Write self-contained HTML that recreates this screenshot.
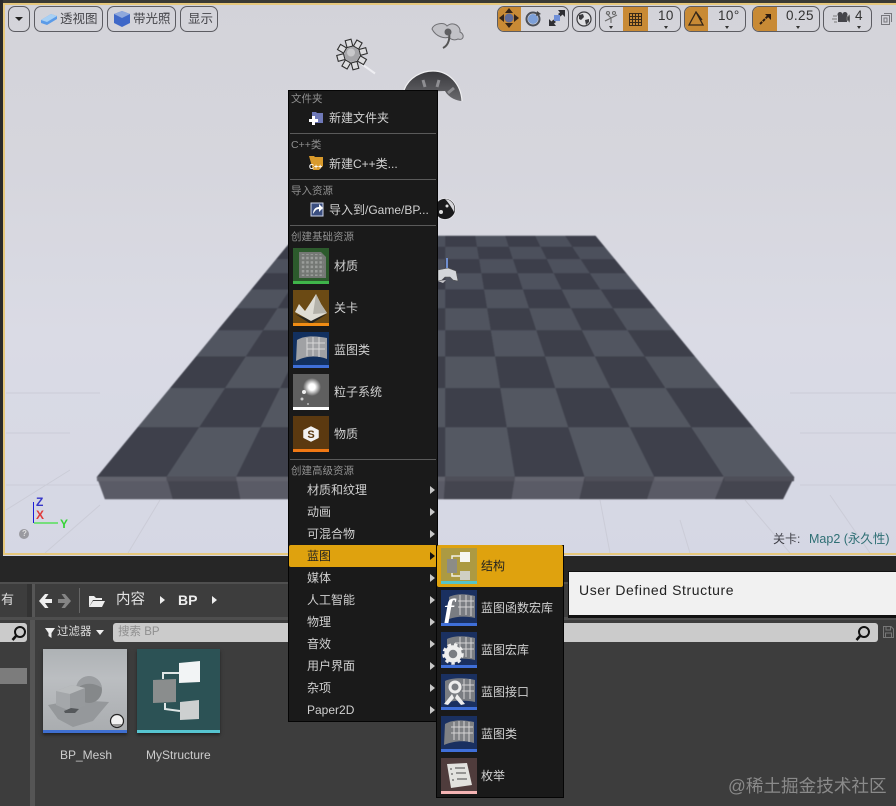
<!DOCTYPE html>
<html><head><meta charset="utf-8">
<style>
*{box-sizing:border-box}
html,body{margin:0;padding:0;background:#3d3d3d}
body{width:896px;height:806px;position:relative;overflow:hidden;font-family:"Liberation Sans","Noto Sans CJK SC",sans-serif}
.a{position:absolute}
.t{position:absolute;white-space:nowrap;line-height:16px}
.btn{position:absolute;top:6px;height:26px;border:1px solid #5c5c62;border-radius:7px;color:#45454a;font-size:12.5px;line-height:24px;white-space:nowrap}
.or{position:absolute;top:7px;height:24px;background:#c88a35}
.h{font-size:10.5px;color:#8f8f8f;left:291px}
.i{font-size:12px;color:#d0d0d0}
.m{left:307px}
.arr{position:absolute;width:0;height:0;border-left:5px solid #c8c8c8;border-top:4.5px solid transparent;border-bottom:4.5px solid transparent}
.sep{position:absolute;left:290px;width:146px;height:1px;background:#5a5a5a}
.tile{position:absolute;width:36px;height:36px}
.bar{position:absolute;left:0;right:0;bottom:0;height:3px}
.num{font-size:13.5px;color:#333;letter-spacing:.4px}
.car{position:absolute;top:26px;border-left:2.5px solid transparent;border-right:2.5px solid transparent;border-top:3px solid #333}
</style></head><body>

<!-- viewport -->
<div class="a" style="left:0;top:0;width:896px;height:556px;background:linear-gradient(180deg,#d3d3d9 0,#d6d6dd 30%,#dadbe5 60%,#d5d7e4 100%)"></div>
<svg class="a" style="left:0;top:0" width="896" height="556" viewBox="0 0 896 556">
 <defs>
  <radialGradient id="gl"><stop offset="0" stop-color="#fff"/><stop offset=".35" stop-color="#fff"/><stop offset="1" stop-color="#fff" stop-opacity="0"/></radialGradient>
  <linearGradient id="dm" x1="0" y1="0" x2="0" y2="1"><stop offset="0" stop-color="#38383c"/><stop offset="1" stop-color="#6a6a6e"/></linearGradient>
 </defs>
 <g stroke="#cbccd7" stroke-width="1" fill="none">
  <path d="M6 393H100M6 433H70M6 485H100M790 393H896M800 433H896M800 485H896"/>
  <path d="M70 470L6 510M100 505L45 553M160 500L128 553M300 500L290 553M600 500L610 553M680 520L690 553M745 500L790 553M830 495L870 553"/>
 </g>
 <g id="floor" style="filter:blur(.5px)"></g>
 <!-- sun -->
 <g transform="translate(352,54.500)">
  <path d="M9 9L23 19" stroke="#eeeef2" stroke-width="2"/>
  <g fill="#dedee0" stroke="#2f2f2f" stroke-width="1.100">
   <rect x="-3" y="-15" width="6" height="7" transform="rotate(-15)"/><rect x="-3" y="-15" width="6" height="7" transform="rotate(30)"/><rect x="-3" y="-15" width="6" height="7" transform="rotate(75)"/><rect x="-3" y="-15" width="6" height="7" transform="rotate(120)"/><rect x="-3" y="-15" width="6" height="7" transform="rotate(165)"/><rect x="-3" y="-15" width="6" height="7" transform="rotate(210)"/><rect x="-3" y="-15" width="6" height="7" transform="rotate(255)"/><rect x="-3" y="-15" width="6" height="7" transform="rotate(300)"/>
  </g>
  <circle r="7.500" fill="#a5a5a8"/><circle cx="-1" cy="-2" r="4" fill="#c8c8ca"/>
 </g>
 <!-- cloud -->
 <g transform="translate(447,36)">
  <path d="M-15 -7C-13 -13 -3 -14 0 -10C6 -15 14 -10 13 -4C18 -2 17 5 11 3C7 5 3 3 2 1C-2 3 -11 1 -15 -7Z" fill="#c2c2c7" stroke="#707074" stroke-width="1"/>
  <path d="M2 -4C3 2 2 9 -4 12" stroke="#555" stroke-width="2" fill="none"/><circle cx="1" cy="-4" r="3.500" fill="#5f5f62"/>
 </g>
 <!-- dome -->
 <path d="M404 92C408 78 422 71 434 71C450 71 461 85 462 101C457 101 449 98 445 91Z" fill="url(#dm)"/>
 <path d="M404 90C409 77 422 71 433 71C449 71 461 84 462 101" fill="none" stroke="#f0f0f2" stroke-width="1.200"/>
 <path d="M423 80l2 7M439 80l-2 7M454 88l-6 5" stroke="#8e8e92" stroke-width="3"/>
 <!-- sphere -->
 <circle cx="445" cy="209" r="10.500" fill="#19191b" stroke="#e8e8ec" stroke-width=".8"/><path d="M445 199a10 10 0 0 1 9 13c-3-6-7-11-9-13z" fill="#d8d8dc"/><circle cx="441" cy="212" r="2" fill="#ddd"/><circle cx="447" cy="206" r="1.500" fill="#ddd"/>
 <!-- gamepad -->
 <path d="M438 270l10-2 8 3 2 10-5-1-3-3h-5l-3 3-4 1z" fill="#d4d6da" stroke="#555" stroke-width=".6"/><path d="M447 258v10" stroke="#6f8fd0" stroke-width="2"/><path d="M438 281l8-1-3 3z" fill="#c8c8cc"/>
 <!-- gizmo -->
 <path d="M33.500 502V523" fill="none" stroke="#1b1bd8" stroke-width="1"/><path d="M34 523H58" stroke="#3ee23e" stroke-width="1.300"/>
 <circle cx="24" cy="534" r="5" fill="#9a9aa0"/>
</svg>
<div class="t" style="left:36px;top:494px;font-size:12px;color:#3535c8;font-weight:bold">Z</div>
<div class="t" style="left:36px;top:507px;font-size:12px;color:#e03a3a;font-weight:bold">X</div>
<div class="t" style="left:60px;top:516px;font-size:12px;color:#36d436;font-weight:bold">Y</div>
<div class="t" style="left:22px;top:526px;font-size:8px;color:#ddd;font-weight:bold">?</div>
<div class="t" style="left:773px;top:531px;font-size:12px;color:#404048">关卡:</div>
<div class="t" style="left:809px;top:531px;font-size:12.500px;color:#2f6f74">Map2 (永久性)</div>

<!-- viewport frame -->
<div class="a" style="left:0;top:0;width:896px;height:3px;background:#3a3a34"></div>
<div class="a" style="left:0;top:0;width:3px;height:556px;background:#2a2a2a"></div>
<div class="a" style="left:3px;top:3px;width:893px;height:552px;border:2px solid #e6c87c;border-right:0"></div>

<!-- toolbar left -->
<div class="btn" style="left:8px;width:22px"></div>
<div class="a" style="left:15px;top:17px;width:0;height:0;border-left:4.500px solid transparent;border-right:4.500px solid transparent;border-top:4.500px solid #222"></div>
<div class="btn" style="left:34px;width:69px;padding-left:25px">透视图</div>
<svg class="a" style="left:40px;top:12px" width="18" height="14"><path d="M1 8L11 2 17 4V7L7 13 1 11Z" fill="#5b9be8"/><path d="M1 8L11 2 17 4 7 10Z" fill="#a8d0f4"/></svg>
<div class="btn" style="left:107px;width:69px;padding-left:25px">带光照</div>
<svg class="a" style="left:113px;top:10px" width="18" height="18"><path d="M9 1L17 4V13L9 17 1 13V4Z" fill="#3f68c8"/><path d="M9 1L17 4 9 8 1 4Z" fill="#8fa8dc"/></svg>
<div class="btn" style="left:180px;width:38px;padding-left:7px">显示</div>

<!-- toolbar right -->
<div class="btn" style="left:497px;width:72px"></div>
<div class="or" style="left:498px;width:23px;border-radius:6px 0 0 6px"></div>
<svg class="a" style="left:499px;top:8px" width="20" height="20" fill="#33241a"><path d="M10 0l4 5H6zM10 20l-4-5h8zM0 10l5-4v8zM20 10l-5 4V6z"/><circle cx="10" cy="10" r="4.500" fill="#5f6c9a"/></svg>
<svg class="a" style="left:523px;top:9px" width="20" height="20"><circle cx="10" cy="10" r="6.500" fill="none" stroke="#4b4f58" stroke-width="2"/><circle cx="10" cy="10" r="5" fill="#7da0d8"/><path d="M14 2l4 3-5 2z" fill="#444"/></svg>
<svg class="a" style="left:548px;top:9px" width="18" height="18"><path d="M10 1h7v7l-2.500-2.500-2 2L10 5l2-1.500zM1 17v-7l2.500 2.500 2-2L8 13l-2 1.500L8 17z" fill="#2f2f34"/><rect x="6" y="6" width="6" height="6" fill="#6f8fd8"/></svg>
<div class="btn" style="left:572px;width:24px"></div>
<svg class="a" style="left:576px;top:11px" width="16" height="16"><circle cx="8" cy="8" r="7" fill="#e0e0e3" stroke="#3a3a3e" stroke-width="1.200"/><path d="M3 4l4-1 1 3-3 3-2-1zM9 9l4-1 0 3-3 3z" fill="#3a3a3e"/></svg>
<div class="btn" style="left:599px;width:82px"></div>
<svg class="a" style="left:603px;top:10px" width="17" height="15" fill="none" stroke="#6a6a6a" stroke-width="1.100"><path d="M8 8L3 3M8 8L14 5M8 8L2 11M8 8V13"/><circle cx="5" cy="3" r="1.500"/><circle cx="11" cy="3" r="1.500"/></svg>
<div class="or" style="left:623px;width:25px"></div>
<svg class="a" style="left:629px;top:13px" width="13" height="13" stroke="#3a2a18" stroke-width="1" fill="none"><path d="M.5 .5H12.500V12.500H.5ZM3.500 .5V12.500M6.500 .5V12.500M9.500 .5V12.500M.5 3.500H12.500M.5 6.500H12.500M.5 9.500H12.500"/></svg>
<div class="t num" style="left:658px;top:8px">10</div>
<div class="btn" style="left:684px;width:62px"></div>
<div class="or" style="left:685px;width:23px;border-radius:6px 0 0 6px"></div>
<svg class="a" style="left:688px;top:11px" width="17" height="16" fill="none" stroke="#33261a" stroke-width="1.300"><path d="M8 1L1 14H15ZM8 1L14 9"/></svg>
<div class="t num" style="left:718px;top:8px">10°</div>
<div class="btn" style="left:752px;width:68px"></div>
<div class="or" style="left:753px;width:24px;border-radius:6px 0 0 6px"></div>
<svg class="a" style="left:758px;top:12px" width="14" height="14"><path d="M2 12L11 3" stroke="#2a1a10" stroke-width="2" stroke-dasharray="3 1"/><path d="M7 2h6v6z" fill="#2a1a10"/></svg>
<div class="t num" style="left:786px;top:8px">0.25</div>
<div class="btn" style="left:823px;width:49px"></div>
<svg class="a" style="left:832px;top:11px" width="18" height="13"><rect x="6" y="4" width="9" height="7" fill="#45454a"/><circle cx="8" cy="3.500" r="2.500" fill="#45454a"/><circle cx="13" cy="3.500" r="2.500" fill="#45454a"/><path d="M15 6l3-2v7l-3-2zM1 5h4M0 8h5M2 11h3" stroke="#7a7a7a" fill="#45454a"/></svg>
<div class="t num" style="left:855px;top:8px">4</div>
<svg class="a" style="left:881px;top:13px" width="11" height="12" fill="none" stroke="#77777c"><rect x=".5" y="2.500" width="8" height="9" /><path d="M3 .5H10.500V9"/><rect x="3" y="5" width="3" height="4"/></svg>
<div class="car" style="left:664px"></div>
<div class="car" style="left:725px"></div>
<div class="car" style="left:796px"></div>
<div class="car" style="left:857px"></div>
<div class="car" style="left:609px"></div>

<!-- dark strip -->
<div class="a" style="left:0;top:556px;width:896px;height:27px;background:#262626"></div>
<!-- content browser -->
<div class="a" style="left:0;top:583px;width:896px;height:223px;background:#3d3d3d"></div>
<div class="a" style="left:0;top:582px;width:896px;height:2px;background:#4f4f4f"></div>
<div class="a" style="left:27px;top:584px;width:5px;height:33px;background:#333"></div>
<div class="a" style="left:32px;top:584px;width:3px;height:33px;background:#565656"></div>
<div class="a" style="left:0;top:617px;width:896px;height:3px;background:#4e4e4e"></div>
<div class="a" style="left:30px;top:620px;width:5px;height:186px;background:#555"></div>
<div class="t" style="left:1px;top:592px;font-size:13px;color:#ddd">有</div>
<svg class="a" style="left:37px;top:592px" width="36" height="18"><path d="M2 9l6-7h3.500L8 7h7v4H8l3.500 5H8z" fill="#efefef"/><path d="M34 9l-6-7h-3.500L28 7h-7v4h7l-3.500 5H28z" fill="#858585"/></svg>
<div class="a" style="left:79px;top:588px;width:1px;height:25px;background:#666"></div>
<svg class="a" style="left:88px;top:594px" width="18" height="14"><path d="M1 13V2h5l2 2h6v2H5z" fill="#eee"/><path d="M5 7h12l-3 6H1z" fill="#eee"/></svg>
<div class="t" style="left:116px;top:592px;font-size:14.500px;color:#e2e2e2">内容</div>
<div class="arr" style="left:160px;top:596px;border-left-color:#eee"></div>
<div class="t" style="left:178px;top:592px;font-size:14px;font-weight:bold;color:#eee">BP</div>
<div class="arr" style="left:212px;top:596px;border-left-color:#eee"></div>

<div class="a" style="left:0;top:623px;width:27px;height:19px;background:#cbcbcb;border-radius:0 3px 3px 0"></div>
<svg class="a" style="left:11px;top:625px" width="16" height="16" fill="none" stroke="#111" stroke-width="2"><circle cx="9" cy="7" r="5"/><path d="M5 11L1.500 15" stroke-width="2.500"/></svg>
<div class="a" style="left:0;top:668px;width:27px;height:16px;background:#7c7c7c"></div>
<svg class="a" style="left:45px;top:627px" width="11" height="12"><path d="M0 1h10L6.500 6v5l-3-2V6z" fill="#eee"/></svg>
<div class="t" style="left:57px;top:624px;font-size:11.500px;color:#ddd">过滤器</div>
<div class="a" style="left:96px;top:630px;border-left:4px solid transparent;border-right:4px solid transparent;border-top:5px solid #eee"></div>
<div class="a" style="left:113px;top:623px;width:765px;height:19px;background:#cbcbcb;border-radius:3px"></div>
<div class="t" style="left:118px;top:624px;font-size:11.500px;color:#8f8f8f">搜索 BP</div>
<svg class="a" style="left:855px;top:625px" width="16" height="16" fill="none" stroke="#111" stroke-width="2"><circle cx="9" cy="7" r="5"/><path d="M5 11L1.500 15" stroke-width="2.500"/></svg>
<svg class="a" style="left:883px;top:626px" width="11" height="12" fill="none" stroke="#777"><path d="M.5 .5H8L10.500 3V11.500H.5ZM3 .5V4H7.500V.5M2.500 11.500V7H8.500V11.500"/></svg>

<!-- asset thumbs -->
<div class="a" style="left:43px;top:649px;width:84px;height:84px;background:linear-gradient(180deg,#aeb2b5 0,#bbbec1 35%,#a9acaf 100%);box-shadow:0 2px 3px #222;overflow:hidden">
 <svg width="84" height="84" style="position:absolute;left:0;top:0">
  <path d="M5 56L32 51 66 53 50 72 30 78 15 70Z" fill="#95989b"/>
  <circle cx="46" cy="41" r="13" fill="#85888a"/><path d="M33 41a13 13 0 0 1 26-2c-8-6-20-6-26 2z" fill="#9a9da0"/>
  <path d="M13 42L29 36 42 39V56L27 62 13 56Z" fill="#a4a7aa"/><path d="M13 42L29 36 42 39 27 45Z" fill="#b8bbbd"/><path d="M27 45L42 39V56L27 62Z" fill="#96999c"/>
  <path d="M21 62l7-3 8 1-4 4H22Z" fill="#55585b"/>
  <circle cx="74" cy="72" r="6.500" fill="#f2f2f2" stroke="#222" stroke-width="1.200"/><path d="M69 75a6 6 0 0 0 10 0z" fill="#999"/>
 </svg>
 <div class="bar" style="background:#3f6fd0"></div>
</div>
<div class="a" style="left:137px;top:649px;width:83px;height:84px;background:#2c5255;box-shadow:0 2px 3px #222;overflow:hidden">
 <svg width="83" height="84" style="position:absolute;left:0;top:0">
  <path d="M26 30V24H42M28 54V60L43 62" fill="none" stroke="#dfe6e6" stroke-width="2"/>
  <path d="M42 14L63 12V33L42 34Z" fill="#f2f4f5"/>
  <path d="M16 31L39 30V53L16 54Z" fill="#8a8d8d"/>
  <path d="M43 53L62 51V70L43 71Z" fill="#cdd0d0"/>
 </svg>
 <div class="bar" style="background:#56c4d0"></div>
</div>
<div class="t" style="left:60px;top:747px;font-size:12px;color:#cdcdcd">BP_Mesh</div>
<div class="t" style="left:146px;top:747px;font-size:12px;color:#cdcdcd">MyStructure</div>

<!-- tooltip -->
<div class="a" style="left:568px;top:571px;width:328px;height:47px;background:#f1f1f1;border:1px solid #111;border-right:0;border-bottom:3px solid #111"></div>
<div class="t" style="left:579px;top:582px;font-size:14px;color:#222;letter-spacing:.58px">User Defined Structure</div>

<!-- main menu -->
<div class="a" style="left:288px;top:90px;width:150px;height:632px;background:#1a1a1a;border:1px solid #050505"></div>
<div class="t h" style="top:91px">文件夹</div>
<svg class="a" style="left:307px;top:110px" width="17" height="15"><path d="M5 2h4l1 1h6v10H5Z" fill="#6f79b8"/><path d="M5 6v3H2v3h3v3h3v-3h3V9H8V6z" fill="#fff"/></svg>
<div class="t i" style="left:329px;top:110px">新建文件夹</div>
<div class="sep" style="top:133px"></div>
<div class="t h" style="top:137px">C++类</div>
<svg class="a" style="left:308px;top:155px" width="17" height="17"><path d="M1 1h5l1 1h8v9l-4 4H5Z" fill="#d99a2b"/></svg>
<div class="t" style="left:309px;top:163px;font-size:7px;font-weight:bold;color:#fff;line-height:10px">C++</div>
<div class="t i" style="left:329px;top:156px">新建C++类...</div>
<div class="sep" style="top:179px"></div>
<div class="t h" style="top:183px">导入资源</div>
<svg class="a" style="left:309px;top:202px" width="15" height="15"><path d="M2 1H14V14H2Z" fill="#3b4f80" stroke="#cfd6ea"/><path d="M4 12C4 7 7 5 10 5V2l4 4-4 4V7C7 7 6 9 4 12Z" fill="#fff"/></svg>
<div class="t i" style="left:329px;top:202px">导入到/Game/BP...</div>
<div class="sep" style="top:225px"></div>
<div class="t h" style="top:229px">创建基础资源</div>

<div class="tile" style="left:293px;top:248px;background:#2c5a2c">
 <svg width="36" height="36" class="a" style="left:0;top:0"><defs><pattern id="dt" width="4.400" height="4.400" patternUnits="userSpaceOnUse"><rect width="2.500" height="2.500" fill="#9a9d9a"/></pattern></defs><path d="M6 4H28L33 9V30H6Z" fill="#747874"/><path d="M8 6H28L31 10V28H8Z" fill="url(#dt)"/></svg>
 <div class="bar" style="background:#3fb44a"></div></div>
<div class="t i" style="left:334px;top:258px">材质</div>

<div class="tile" style="left:293px;top:290px;background:#6b4a14">
 <svg width="36" height="36" class="a" style="left:0;top:0"><path d="M2 24L18 34 34 24 18 30Z" fill="#26241f"/><path d="M2 22L6 14 12 21 18 12 23 4 28 14 34 23 18 31Z" fill="#dedcd4"/><path d="M23 4L28 14 34 23 20 24Z" fill="#b4b2aa"/></svg>
 <div class="bar" style="background:#f08c14"></div></div>
<div class="t i" style="left:334px;top:300px">关卡</div>

<div class="tile" style="left:293px;top:332px;background:#12305f">
 <svg width="36" height="36" class="a" style="left:0;top:0"><path d="M4 8C12 3 24 4 34 6V27C24 23 12 24 3 29Z" fill="#a0a1a4"/><path d="M14 6v18M20 5v19M26 5v20M14 11H32M14 17H32" stroke="#d8d8d8"/></svg>
 <div class="bar" style="background:#3f6fd8"></div></div>
<div class="t i" style="left:334px;top:342px">蓝图类</div>

<div class="tile" style="left:293px;top:374px;background:#5f5f5f">
 <svg width="36" height="36" class="a" style="left:0;top:0"><circle cx="19" cy="13" r="9" fill="url(#gl)"/><circle cx="11" cy="18" r="2" fill="#eee"/><circle cx="9" cy="25" r="1.500" fill="#ccc"/><circle cx="15" cy="30" r="1" fill="#bbb"/></svg>
 <div class="bar" style="background:#fff"></div></div>
<div class="t i" style="left:334px;top:384px">粒子系统</div>

<div class="tile" style="left:293px;top:416px;background:#5b3910">
 <svg width="36" height="36" class="a" style="left:0;top:0"><path d="M18 11L25 14.500V21.500L18 25 11 21.500V14.500Z" fill="#f2f2f2" stroke="#f2f2f2" stroke-width="1.500" stroke-linejoin="round"/><text x="18" y="22" text-anchor="middle" font-family="Liberation Sans" font-weight="bold" font-size="11" fill="#5b3910">S</text></svg>
 <div class="bar" style="background:#f07814"></div></div>
<div class="t i" style="left:334px;top:426px">物质</div>

<div class="sep" style="top:459px"></div>
<div class="t h" style="top:463px">创建高级资源</div>
<div class="t i m" style="top:482px">材质和纹理</div><div class="arr" style="left:430px;top:486px"></div>
<div class="t i m" style="top:504px">动画</div><div class="arr" style="left:430px;top:508px"></div>
<div class="t i m" style="top:526px">可混合物</div><div class="arr" style="left:430px;top:530px"></div>
<div class="a" style="left:289px;top:545px;width:148px;height:22px;background:#dfa20e;border-radius:2px"></div>
<div class="t i m" style="top:548px;color:#222">蓝图</div><div class="arr" style="left:430px;top:552px;border-left-color:#111"></div>
<div class="t i m" style="top:570px">媒体</div><div class="arr" style="left:430px;top:574px"></div>
<div class="t i m" style="top:592px">人工智能</div><div class="arr" style="left:430px;top:596px"></div>
<div class="t i m" style="top:614px">物理</div><div class="arr" style="left:430px;top:618px"></div>
<div class="t i m" style="top:636px">音效</div><div class="arr" style="left:430px;top:640px"></div>
<div class="t i m" style="top:658px">用户界面</div><div class="arr" style="left:430px;top:662px"></div>
<div class="t i m" style="top:680px">杂项</div><div class="arr" style="left:430px;top:684px"></div>
<div class="t i m" style="top:702px">Paper2D</div><div class="arr" style="left:430px;top:706px"></div>

<!-- submenu -->
<div class="a" style="left:436px;top:545px;width:128px;height:253px;background:#1a1a1a;border:1px solid #050505"></div>
<div class="a" style="left:437px;top:545px;width:126px;height:42px;background:#dfa20e;border-radius:2px"></div>
<div class="tile" style="left:441px;top:548px;background:#ac9a42">
 <svg width="36" height="36" class="a" style="left:0;top:0"><path d="M11 11V8H19M11 25V28H19" fill="none" stroke="#f0f0e8" stroke-width="1.500"/><path d="M19 4H29V14H19Z" fill="#f6f6f2"/><path d="M6 11H16V25H6Z" fill="#8c8c86"/><path d="M19 23H29V32H19Z" fill="#cfcfc4"/></svg>
 <div class="bar" style="background:#56c4c8"></div></div>
<div class="t" style="left:481px;top:558px;font-size:12px;color:#222">结构</div>

<div class="tile" style="left:441px;top:590px;background:#1a3060">
 <svg width="36" height="36" class="a" style="left:0;top:0"><path d="M8 7C16 3 26 4 34 6V28C26 26 16 26 8 29Z" fill="#7a7d82"/><path d="M19 5v20M25 5v20M30 6v20M17 11H33M17 17H33" stroke="#d4d4d4"/></svg>
 <div class="t" style="left:3px;top:5px;font-family:'Liberation Serif',serif;font-style:italic;font-weight:bold;font-size:30px;line-height:30px;color:#fff">f</div>
 <div class="bar" style="background:#3f6fd8"></div></div>
<div class="t i" style="left:481px;top:600px">蓝图函数宏库</div>

<div class="tile" style="left:441px;top:632px;background:#1a3060">
 <svg width="36" height="36" class="a" style="left:0;top:0"><path d="M6 7C14 3 26 4 34 6V28C26 26 14 26 6 29Z" fill="#7a7d82"/><path d="M19 5v20M25 5v20M30 6v20M14 11H33M14 17H33" stroke="#d4d4d4"/><circle cx="12" cy="22" r="6.500" fill="none" stroke="#eee" stroke-width="4.500"/><circle cx="12" cy="22" r="9.500" fill="none" stroke="#eee" stroke-width="2.500" stroke-dasharray="3.500 3"/></svg>
 <div class="bar" style="background:#3f6fd8"></div></div>
<div class="t i" style="left:481px;top:642px">蓝图宏库</div>

<div class="tile" style="left:441px;top:674px;background:#1a3060">
 <svg width="36" height="36" class="a" style="left:0;top:0"><path d="M4 7C12 3 26 4 34 6V28C26 26 12 26 4 29Z" fill="#7a7d82"/><path d="M23 5v20M29 5v20M21 11H33M21 17H33" stroke="#d4d4d4"/><circle cx="14" cy="13" r="5" fill="none" stroke="#eee" stroke-width="3"/><path d="M3 30L11 20 13 24 7 31ZM24 30L16 20 14 24 20 31Z" fill="#eee"/></svg>
 <div class="bar" style="background:#3f6fd8"></div></div>
<div class="t i" style="left:481px;top:684px">蓝图接口</div>

<div class="tile" style="left:441px;top:716px;background:#1a3060">
 <svg width="36" height="36" class="a" style="left:0;top:0"><path d="M4 8C12 3 24 4 33 6V27C24 24 12 25 3 29Z" fill="#7f8184"/><path d="M13 6v18M18 5v19M23 5v20M28 6v20M10 11H32M10 17H32" stroke="#d4d4d4"/></svg>
 <div class="bar" style="background:#3f6fd8"></div></div>
<div class="t i" style="left:481px;top:726px">蓝图类</div>

<div class="tile" style="left:441px;top:758px;background:#4f3c3c">
 <svg width="36" height="36" class="a" style="left:0;top:0"><path d="M6 6L26 5 31 27 10 30Z" fill="#e2e2de"/><path d="M9 11l2 0M14 10l10 0M10 16l2 0M15 15l10 0M11 22l2 0M16 21l10 0" stroke="#666" stroke-width="1.200"/></svg>
 <div class="bar" style="background:#f4b4b4"></div></div>
<div class="t i" style="left:481px;top:768px">枚举</div>

<div class="t" style="left:728px;top:776px;font-size:17.600px;line-height:20px;color:#8a8a8a">@稀土掘金技术社区</div>

<script>
(function(){
var s='',hz=54,ny=182,fy=423,N=10;
function Y(r){return hz+1/(1/ny+(1/fy-1/ny)*r/N)}
function X(c,y){var w=300+397*(y-236)/241;return 445.5+(c/N-.5)*w}
function q(a,f){return '<polygon points="'+a.map(function(p){return p[0].toFixed(1)+','+p[1].toFixed(1)}).join(' ')+'" fill="'+f+'" stroke="'+f+'" stroke-width=".5"/>'}
for(var r=0;r<N;r++){var y0=Y(r),y1=Y(r+1);
 for(var c=0;c<N;c++){
  var d=(r+c)%2==1;
  var t=r/9;
  var f=d?'rgb('+(60+t*2|0)+','+(62+t*2|0)+','+(74+t*1|0)+')':'rgb('+(76+t*8|0)+','+(80+t*8|0)+','+(92+t*6|0)+')';
  s+=q([[X(c,y0),y0],[X(c+1,y0),y0],[X(c+1,y1),y1],[X(c,y1),y1]],f);
 }}
for(var c=0;c<N;c++){var d=c%2==1;
 var xt0=97+69.7*c,xt1=xt0+69.7,xb0=105+67.8*c,xb1=xb0+67.8;
 s+=q([[xt0,477],[xt1,477],[xb1,499],[xb0,499]],d?'#44454f':'#5a5b66');
 s+=q([[xt0,477],[xt1,477],[xt1-.3,481],[xt0+.3,481]],d?'#4e4f59':'#62636d');
}
document.getElementById('floor').innerHTML=s;
})();
</script>
</body></html>
